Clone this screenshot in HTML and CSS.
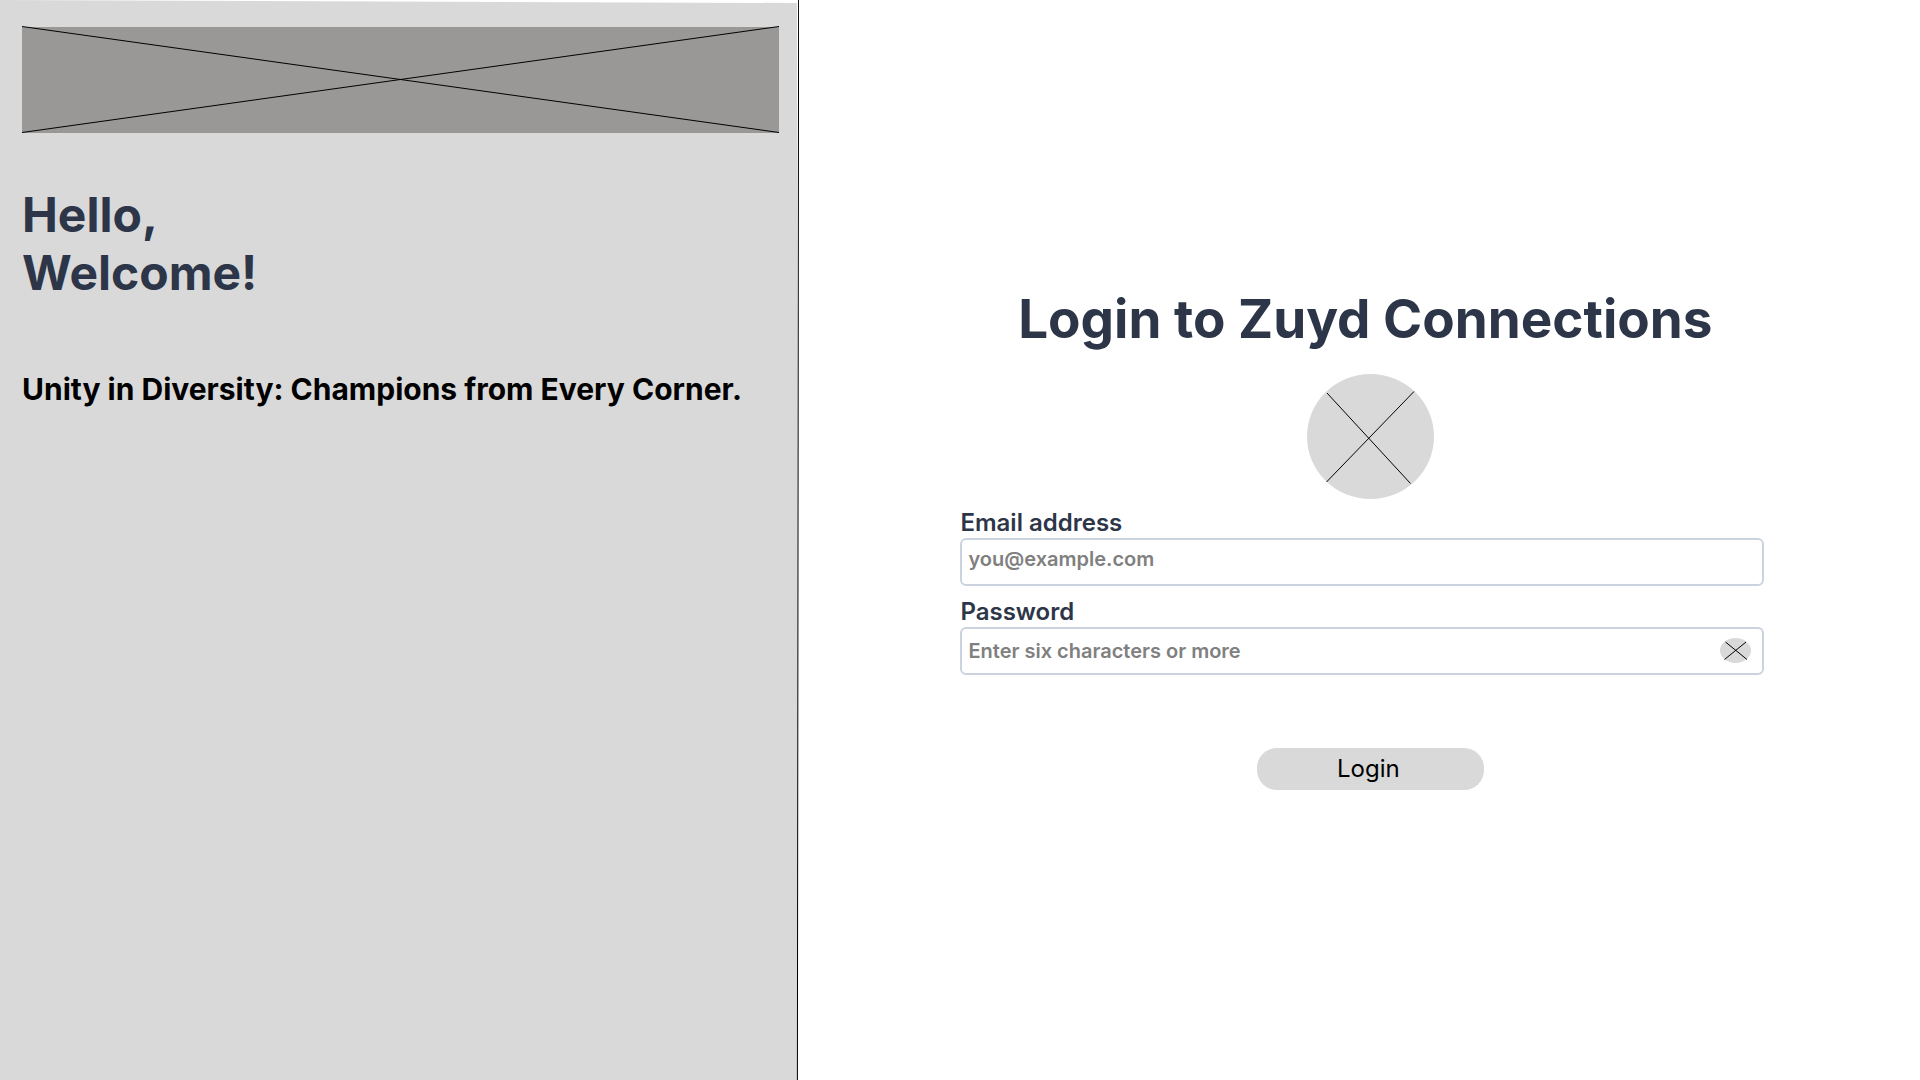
FILE: index.html
```html
<!DOCTYPE html>
<html lang="en">
<head>
<meta charset="utf-8">
<meta name="viewport" content="width=device-width, initial-scale=1">
<title>Login - Zuyd Connections</title>
<link rel="stylesheet" href="styles.css">
</head>
<body>
<div class="page">
  <aside class="intro">
    <svg class="intro-backdrop" viewBox="0 0 799 1080" preserveAspectRatio="none" aria-hidden="true">
      <polygon points="0,0 797,3 798,1080 0,1080" fill="#d9d9d9"/>
      <line x1="798.6" y1="0" x2="797.4" y2="1080" stroke="#000"/>
    </svg>
    <svg class="banner" viewBox="0 0 757 107" preserveAspectRatio="none" role="img" aria-label="Banner">
      <rect y="1" width="757" height="106" fill="#999896"/>
      <path d="M0 .5 757 106.5M0 106.5 757 .5" stroke="#000"/>
    </svg>
    <h1 class="greeting">Hello,<br>Welcome!</h1>
    <p class="tagline">Unity in Diversity: Champions from Every Corner.</p>
  </aside>
  <main class="login">
    <form class="login-form">
      <h2 class="title">Login to Zuyd Connections</h2>
      <svg class="logo" viewBox="0 0 127 125" role="img" aria-label="Logo">
        <ellipse cx="63.5" cy="62.5" rx="63.5" ry="62.5" fill="#d9d9d9"/>
        <path d="M20 19 103.500 109.500M19.500 108 107 17.500" stroke="#000"/>
      </svg>
      <div class="field">
        <label for="email">Email address</label>
        <input class="email" id="email" type="email" placeholder="you@example.com">
      </div>
      <div class="field">
        <label for="password">Password</label>
        <div class="password-box">
          <input id="password" type="password" placeholder="Enter six characters or more">
          <button class="reveal" type="button" aria-label="Show password">
            <svg viewBox="0 0 31 25" width="31" height="25" aria-hidden="true">
              <ellipse cx="15.500" cy="12.500" rx="15.500" ry="12.500" fill="#d9d9d9"/>
              <path d="M5.500 4 27 21.500M4.500 21.500 26 4" stroke="#000"/>
            </svg>
          </button>
        </div>
      </div>
      <button class="submit" type="submit">Login</button>
    </form>
  </main>
</div>
</body>
</html>
```
FILE: styles.css
```css
* {
  box-sizing: border-box;
}

body {
  margin: 0;
  background: #fff;
  color: #2d3648;
  font-family: Inter, "Liberation Sans", sans-serif;
}

h1, h2, p {
  margin: 0;
  font-optical-sizing: none;
}

.page {
  display: grid;
  grid-template-columns: 799fr 1121fr;
  min-height: 100vh;
}

.intro {
  position: relative;
  display: flex;
  flex-direction: column;
  padding: 26px 20px 26px 22px;
}

.intro-backdrop {
  position: absolute;
  inset: 0;
  width: 100%;
  height: 100%;
}

.banner {
  position: relative;
  width: 100%;
  height: 107px;
}

.greeting {
  position: relative;
  margin-top: 53px;
  font-size: 48px;
  line-height: 58px;
  font-weight: 700;
}

.tagline {
  position: relative;
  margin-top: 69px;
  color: #000;
  font-size: 30px;
  line-height: 37px;
  font-weight: 700;
}

.login {
  display: flex;
  align-items: center;
  padding: 0 13.9% 2px 14.4%;
}

.login-form {
  display: flex;
  flex-direction: column;
  width: 100%;
}

.title {
  margin-bottom: 23px;
  padding-left: 6px;
  font-size: 53px;
  line-height: 63px;
  font-weight: 700;
  text-align: center;
}

.logo {
  width: 127px;
  height: 125px;
  margin: 0 0 9px 16px;
  align-self: center;
}

.field {
  display: flex;
  flex-direction: column;
  margin-bottom: 11px;
}

label {
  margin-bottom: 1px;
  font-size: 24px;
  line-height: 29px;
  font-weight: 600;
}

input {
  width: 100%;
  height: 48px;
  padding: 0 6px;
  border: 2px solid #cbd2e0;
  border-radius: 6px;
  background: #fff;
  color: #2d3648;
  font: 600 20px/24px Inter, "Liberation Sans", sans-serif;
}

.email {
  padding-bottom: 6px;
}

input::placeholder {
  color: #808080;
  opacity: 1;
}

.password-box {
  position: relative;
}

.reveal {
  position: absolute;
  top: 11px;
  right: 13px;
  width: 31px;
  height: 25px;
  padding: 0;
  border: 0;
  background: none;
}

.reveal svg {
  display: block;
}

.submit {
  align-self: center;
  width: 227px;
  height: 42px;
  margin: 62px 0 0 16px;
  padding: 0 4px 2px 0;
  border: 0;
  border-radius: 20px;
  background: #d9d9d9;
  color: #000;
  font: 400 24px/29px Inter, "Liberation Sans", sans-serif;
}
```
